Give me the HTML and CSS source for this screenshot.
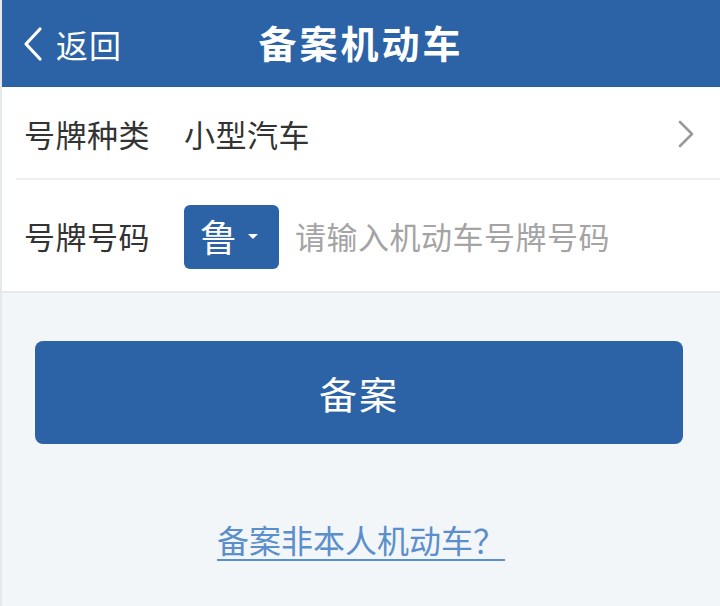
FILE: index.html
```html
<!DOCTYPE html>
<html lang="zh-CN">
<head>
<meta charset="utf-8">
<title>备案机动车</title>
<link rel="stylesheet" href="styles.css">
</head>
<body>
<div class="page">
  <header class="topbar">
    <a class="back">
      <svg class="back-icon" width="22" height="36" viewBox="0 0 22 36"><path d="M18 3 L4 18 L18 33" fill="none" stroke="#fff" stroke-width="3.2" stroke-linecap="round" stroke-linejoin="round"/></svg>
      <span class="back-text">返回</span>
    </a>
    <h1 class="title">备案机动车</h1>
  </header>
  <section class="form">
    <div class="row row-type">
      <span class="label">号牌种类</span>
      <span class="value">小型汽车</span>
      <svg class="chev" width="16" height="28" viewBox="0 0 16 28"><path d="M2 2 L14 14 L2 26" fill="none" stroke="#9a9a9a" stroke-width="2.6" stroke-linecap="round" stroke-linejoin="round"/></svg>
    </div>
    <div class="row row-number">
      <span class="label">号牌号码</span>
      <span class="prov">鲁<span class="caret"></span></span>
      <span class="placeholder">请输入机动车号牌号码</span>
    </div>
  </section>
  <div class="actions">
    <button class="submit">备案</button>
    <a class="other">备案非本人机动车？</a>
  </div>
</div>
</body>
</html>
```
FILE: styles.css
```css
* { box-sizing: border-box; }
html, body { margin: 0; padding: 0; }
body {
  width: 720px;
  height: 606px;
  overflow: hidden;
  background: #f3f6f9;
  font-family: "Noto Sans CJK SC", "Noto Sans", sans-serif;
}
.page {
  height: 606px;
  border-left: 2px solid #e6e9ec;
}
.topbar {
  height: 87px;
  background: #2c63a6;
  display: flex;
  align-items: center;
  justify-content: center;
  position: relative;
  border-bottom: 1px solid #2a5f9f;
}
.back {
  position: absolute;
  left: 20px;
  top: 0;
  height: 87px;
  display: flex;
  align-items: center;
  color: #fff;
}
.back-icon { margin-right: 12px; }
.back-text {
  font-size: 32px;
  line-height: 1;
  letter-spacing: 1px;
}
.title {
  margin: 0 0 2px 0;
  color: #fff;
  font-size: 38px;
  font-weight: 700;
  letter-spacing: 3px;
  line-height: 1;
}
.form {
  background: #fff;
  border-bottom: 2px solid #e7eaed;
}
.row {
  display: flex;
  align-items: center;
  padding-left: 22px;
  padding-right: 26px;
  color: #333;
}
.row-type {
  height: 93px;
  position: relative;
}
.row-type::after {
  content: "";
  position: absolute;
  left: 14px;
  right: 0;
  bottom: 0;
  height: 2px;
  background: #eceef0;
}
.row-number {
  height: 111px;
}
.label {
  font-size: 31px;
  width: 160px;
  letter-spacing: 0.5px;
  line-height: 1;
}
.value {
  font-size: 31px;
  flex: 1;
  line-height: 1;
  letter-spacing: 0.5px;
}
.prov {
  width: 95px;
  height: 64px;
  background: #2c63a6;
  border-radius: 6px;
  color: #fff;
  font-size: 37px;
  display: flex;
  align-items: center;
  padding-left: 16px;
  line-height: 1;
  margin-top: 2px;
}
.caret {
  display: inline-block;
  margin-left: 11px;
  width: 0;
  height: 0;
  border-left: 5px solid transparent;
  border-right: 5px solid transparent;
  border-top: 5px solid #fff;
}
.placeholder {
  margin-left: 16px;
  font-size: 31px;
  color: #a4a4a4;
  line-height: 1;
  letter-spacing: 0.5px;
}
.actions {
  display: flex;
  flex-direction: column;
  align-items: center;
  padding-top: 48px;
}
.submit {
  width: 648px;
  height: 103px;
  border: none;
  border-radius: 8px;
  background: #2c63a6;
  color: #fff;
  font-family: inherit;
  font-size: 38px;
  letter-spacing: 2px;
  margin-left: -4px;
}
.other {
  margin-top: 76px;
  font-size: 32px;
  color: #5a8fcb;
  text-decoration: underline;
  text-decoration-thickness: 2px;
  text-underline-offset: 6px;
  line-height: 1.2;
}
```
